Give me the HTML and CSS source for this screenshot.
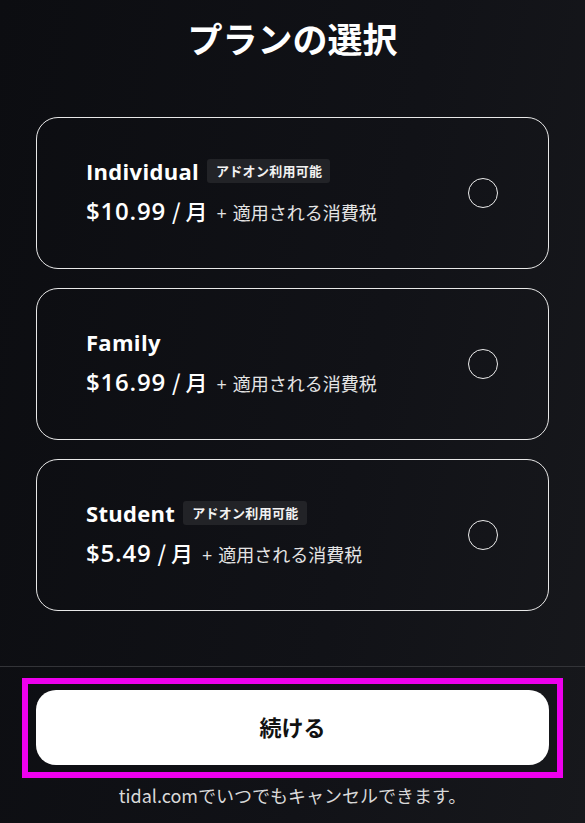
FILE: index.html
```html
<!DOCTYPE html>
<html lang="ja">
<head>
<meta charset="utf-8">
<title>プランの選択</title>
<link rel="stylesheet" href="styles.css">
</head>
<body>
<div class="page">
  <h1 class="title">プランの選択</h1>
  <div class="plans">
    <div class="plan">
      <div class="plan-info">
        <div class="name-row"><span class="plan-name">Individual</span><span class="badge">アドオン利用可能</span></div>
        <div class="price-row"><span class="price">$10.99</span><span class="per">/ 月</span><span class="plus">+</span><span class="tax">適用される消費税</span></div>
      </div>
      <span class="radio"></span>
    </div>
    <div class="plan">
      <div class="plan-info">
        <div class="name-row"><span class="plan-name">Family</span></div>
        <div class="price-row"><span class="price">$16.99</span><span class="per">/ 月</span><span class="plus">+</span><span class="tax">適用される消費税</span></div>
      </div>
      <span class="radio"></span>
    </div>
    <div class="plan">
      <div class="plan-info">
        <div class="name-row"><span class="plan-name">Student</span><span class="badge">アドオン利用可能</span></div>
        <div class="price-row"><span class="price">$5.49</span><span class="per">/ 月</span><span class="plus">+</span><span class="tax">適用される消費税</span></div>
      </div>
      <span class="radio"></span>
    </div>
  </div>
  <div class="footer">
    <div class="highlight">
      <button class="continue">続ける</button>
    </div>
    <p class="note">tidal.comでいつでもキャンセルできます。</p>
  </div>
</div>
</body>
</html>
```
FILE: styles.css
```css
* { box-sizing: border-box; }
html, body { margin: 0; padding: 0; }
body {
  background: linear-gradient(100deg, #0c0d11 0%, #111217 60%, #17181c 100%);
  color: #fff;
  font-family: "Open Sans", "Noto Sans CJK JP", sans-serif;
  width: 585px;
  height: 823px;
  overflow: hidden;
}
.page {
  display: flex;
  flex-direction: column;
  height: 823px;
}
.title {
  margin: 0;
  padding-top: 16px;
  line-height: 44px;
  font-size: 35px;
  font-weight: 700;
  text-align: center;
  font-family: "Noto Sans CJK JP", sans-serif;
}
.plans {
  margin-top: 57px;
  padding: 0 36px;
  display: flex;
  flex-direction: column;
  gap: 19px;
}
.plan {
  height: 152px;
  border: 1.5px solid #e8e8e8;
  border-radius: 22px;
  padding: 0 50px 0 49px;
  display: flex;
  align-items: center;
  justify-content: space-between;
}
.plan-info {
  display: flex;
  flex-direction: column;
  gap: 11px;
  padding-bottom: 5px;
}
.name-row {
  display: flex;
  align-items: center;
  gap: 8px;
  height: 28px;
}
.plan-name {
  font-size: 22px;
  font-weight: 700;
  letter-spacing: 0.3px;
}
.badge {
  background: #222327;
  border-radius: 3px;
  font-family: "Noto Sans CJK JP", sans-serif;
  font-size: 13px;
  font-weight: 700;
  letter-spacing: 0.3px;
  padding: 2px 8px 2px 9px;
  line-height: 20px;
  color: #f2f2f2;
}
.price-row {
  display: flex;
  align-items: baseline;
  height: 28px;
  line-height: 28px;
}
.price {
  font-size: 24px;
  font-weight: 600;
  letter-spacing: 0.8px;
}
.per {
  font-family: "Noto Sans CJK JP", sans-serif;
  font-size: 22px;
  font-weight: 500;
  margin-left: 6px;
}
.plus {
  font-size: 18px;
  color: #e4e4e4;
  margin-left: 9px;
  margin-right: 6px;
}
.tax {
  font-family: "Noto Sans CJK JP", sans-serif;
  font-size: 18px;
  color: #e4e4e4;
}
.radio {
  width: 30px;
  height: 30px;
  border: 1.5px solid #ececec;
  border-radius: 50%;
  flex: none;
}
.footer {
  margin-top: auto;
  border-top: 1px solid #333438;
  padding-top: 11px;
  padding-bottom: 16px;
}
.highlight {
  margin: 0 22px;
  border: 6px solid #ee00ee;
  padding: 6px 8px 7px;
}
.continue {
  display: block;
  width: 100%;
  height: 75px;
  border: none;
  border-radius: 20px;
  background: #fff;
  color: #111;
  font-family: "Noto Sans CJK JP", sans-serif;
  font-size: 22px;
  font-weight: 700;
  padding: 0 0 3px;
  cursor: pointer;
}
.note {
  margin: 5px 0 0;
  text-align: center;
  font-family: "Noto Sans CJK JP", sans-serif;
  font-size: 18px;
  line-height: 24px;
  color: #d9d9d9;
}
```
